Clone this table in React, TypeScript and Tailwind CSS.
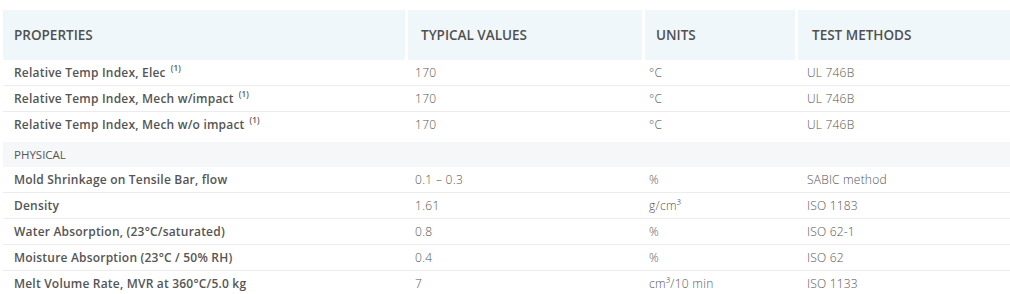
const rows1 = [
  { label: 'Relative Temp Index, Elec', sup: true, value: '170', unit: '°C', method: 'UL 746B' },
  { label: 'Relative Temp Index, Mech w/impact', sup: true, value: '170', unit: '°C', method: 'UL 746B' },
  { label: 'Relative Temp Index, Mech w/o impact', sup: true, value: '170', unit: '°C', method: 'UL 746B' },
];

const rows2 = [
  { label: 'Mold Shrinkage on Tensile Bar, flow', value: '0.1 – 0.3', unit: '%', method: 'SABIC method' },
  { label: 'Density', value: '1.61', unit: 'g/cm³', method: 'ISO 1183' },
  { label: 'Water Absorption, (23°C/saturated)', value: '0.8', unit: '%', method: 'ISO 62-1' },
  { label: 'Moisture Absorption (23°C / 50% RH)', value: '0.4', unit: '%', method: 'ISO 62' },
  { label: 'Melt Volume Rate, MVR at 360°C/5.0 kg', value: '7', unit: 'cm³/10 min', method: 'ISO 1133' },
];

type Row = { label: string; sup?: boolean; value: string; unit: string; method: string };

function DataRow({ row, last }: { row: Row; last?: boolean }) {
  return (
    <div className={`flex h-[26px] items-center ${last ? '' : 'border-b border-[#ececec]'}`}>
      <div className="w-[405px] pl-[11px] text-[12px] font-semibold tracking-[0.2px] text-[#555]">
        {row.label}
        {row.sup && <sup className="ml-[5px] text-[8px] font-semibold -top-[6px]">(1)</sup>}
      </div>
      <div className="w-[237px] pl-[7px] text-[12px] font-light tracking-[0.3px] text-[#555]">{row.value}</div>
      <div className="w-[153px] pl-[4px] text-[12px] font-light tracking-[0.3px] text-[#555]">{row.unit}</div>
      <div className="flex-1 pl-[9px] text-[12px] font-light tracking-[0.2px] text-[#555]">{row.method}</div>
    </div>
  );
}

export default function App() {
  return (
    <div className="w-[1010px] h-[294px] overflow-hidden bg-white pt-[10px] pl-[3px]" style={{ fontFamily: '"Open Sans", sans-serif' }}>
      {/* header */}
      <div className="flex h-[50px] gap-[3px] text-[13.5px] font-semibold text-[#505050]">
        <div className="flex w-[402px] items-center bg-[#f0f7fb] pl-[11px]">PROPERTIES</div>
        <div className="flex w-[234px] items-center bg-[#f0f7fb] pl-[13px]">TYPICAL VALUES</div>
        <div className="flex w-[150px] items-center bg-[#f0f7fb] pl-[11px]">UNITS</div>
        <div className="flex flex-1 items-center bg-[#f0f7fb] pl-[14px]">TEST METHODS</div>
      </div>

      {rows1.map((r, i) => (
        <DataRow key={r.label} row={r} last={i === rows1.length - 1} />
      ))}

      <div className="mt-[4px] flex h-[25px] items-center bg-[#f6f7f8] pl-[11px] text-[11.5px] text-[#555]">
        PHYSICAL
      </div>

      {rows2.map((r) => (
        <DataRow key={r.label} row={r} />
      ))}
    </div>
  );
}
